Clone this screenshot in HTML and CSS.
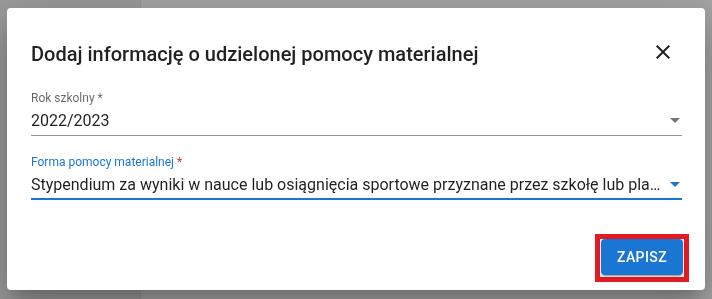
FILE: index.html
```html
<!DOCTYPE html>
<html lang="pl">
<head>
<meta charset="utf-8">
<title>Dodaj informację</title>
<link rel="stylesheet" href="styles.css">
</head>
<body>
<div class="page">
  <aside class="sidebar"></aside>
  <main class="main"></main>
</div>
<div class="backdrop"></div>
<div class="dialog" role="dialog">
  <div class="dialog-header">
    <h2 class="dialog-title">Dodaj informację o udzielonej pomocy materialnej</h2>
    <button class="close-btn" aria-label="Zamknij">
      <svg viewBox="0 0 24 24" width="24" height="24"><path d="M19 6.41 17.59 5 12 10.59 6.41 5 5 6.41 10.59 12 5 17.59 6.41 19 12 13.41 17.59 19 19 17.59 13.41 12z"/></svg>
    </button>
  </div>
  <div class="dialog-content">
    <div class="field">
      <div class="field-label">Rok szkolny *</div>
      <div class="field-row">
        <div class="field-value">2022/2023</div>
        <svg class="arrow" viewBox="7 10 10 5" width="10" height="5"><path d="M7 10l5 5 5-5z"/></svg>
      </div>
    </div>
    <div class="field field-focused">
      <div class="field-label">Forma pomocy materialnej <span class="req">*</span></div>
      <div class="field-row">
        <div class="field-value">Stypendium za wyniki w nauce lub osiągnięcia sportowe przyznane przez szkołę lub placówkę</div>
        <svg class="arrow" viewBox="7 10 10 5" width="10" height="5"><path d="M7 10l5 5 5-5z"/></svg>
      </div>
    </div>
  </div>
  <div class="dialog-actions">
    <span class="highlight">
      <button class="btn-primary">Zapisz</button>
    </span>
  </div>
</div>
</body>
</html>
```
FILE: styles.css
```css
html, body {
  margin: 0;
  padding: 0;
  height: 100%;
}
body {
  font-family: Roboto, "Liberation Sans", Arial, sans-serif;
  background: #ffffff;
  overflow: hidden;
}
.page {
  display: flex;
  height: 100%;
}
.sidebar {
  width: 140px;
  background: #f0f0f0;
  border-right: 1px solid #e6e6e6;
  flex: none;
}
.main {
  flex: 1;
}
.backdrop {
  position: fixed;
  inset: 0;
  background: rgba(0, 0, 0, 0.36);
}
.dialog {
  position: fixed;
  left: 7px;
  top: 8px;
  width: 698px;
  height: 282px;
  background: #ffffff;
  border-radius: 4px;
  box-shadow: 0 11px 15px -7px rgba(0,0,0,.2), 0 24px 38px 3px rgba(0,0,0,.14), 0 9px 46px 8px rgba(0,0,0,.12);
  display: flex;
  flex-direction: column;
  box-sizing: border-box;
}
.dialog-header {
  display: flex;
  align-items: flex-start;
  padding: 30px 22px 0 24px;
}
.dialog-title {
  flex: 1;
  margin: 0;
  font-size: 20px;
  font-weight: 500;
  line-height: 32px;
  letter-spacing: 0;
  color: rgba(0, 0, 0, 0.87);
}
.close-btn {
  width: 40px;
  height: 40px;
  margin-top: -6px;
  padding: 8px;
  border: 0;
  background: transparent;
  border-radius: 50%;
  display: flex;
  align-items: center;
  justify-content: center;
  cursor: pointer;
}
.close-btn svg {
  fill: rgba(0, 0, 0, 0.87);
  display: block;
}
.dialog-content {
  display: flex;
  flex-direction: column;
  gap: 18px;
  padding: 18px 23px 0 24px;
}
.field {
  border-bottom: 1px solid #949494;
}
.field-label {
  font-size: 12px;
  line-height: 16px;
  color: rgba(0, 0, 0, 0.6);
}
.field-row {
  display: flex;
  align-items: center;
  padding: 3px 0;
}
.field-value {
  flex: 1;
  min-width: 0;
  margin-right: 8px;
  font-size: 16px;
  line-height: 23px;
  color: rgba(0, 0, 0, 0.87);
  white-space: nowrap;
  overflow: hidden;
  text-overflow: ellipsis;
}
.arrow {
  flex: none;
  margin-right: 2px;
  fill: rgba(0, 0, 0, 0.54);
  display: block;
}
.field-focused {
  border-bottom: 2px solid #1976d2;
}
.field-focused .field-row {
  padding-bottom: 2px;
}
.field-focused .field-label {
  color: #1976d2;
}
.field-focused .arrow {
  fill: #1976d2;
}
.req {
  color: #d32f2f;
}
.dialog-actions {
  display: flex;
  justify-content: flex-end;
  padding: 34px 16px 8px;
}
.highlight {
  display: flex;
  border: 5px solid #e31b23;
  padding: 0 1px 2px;
}
.btn-primary {
  height: 36px;
  padding: 6px 16px;
  border: 0;
  border-radius: 4px;
  background: #1976d2;
  color: #ffffff;
  font-family: Roboto, "Liberation Sans", Arial, sans-serif;
  font-size: 14px;
  font-weight: 500;
  letter-spacing: 0.4px;
  text-transform: uppercase;
  line-height: 24px;
  box-shadow: 0 3px 1px -2px rgba(0,0,0,.2), 0 2px 2px 0 rgba(0,0,0,.14), 0 1px 5px 0 rgba(0,0,0,.12);
  cursor: pointer;
}
```
